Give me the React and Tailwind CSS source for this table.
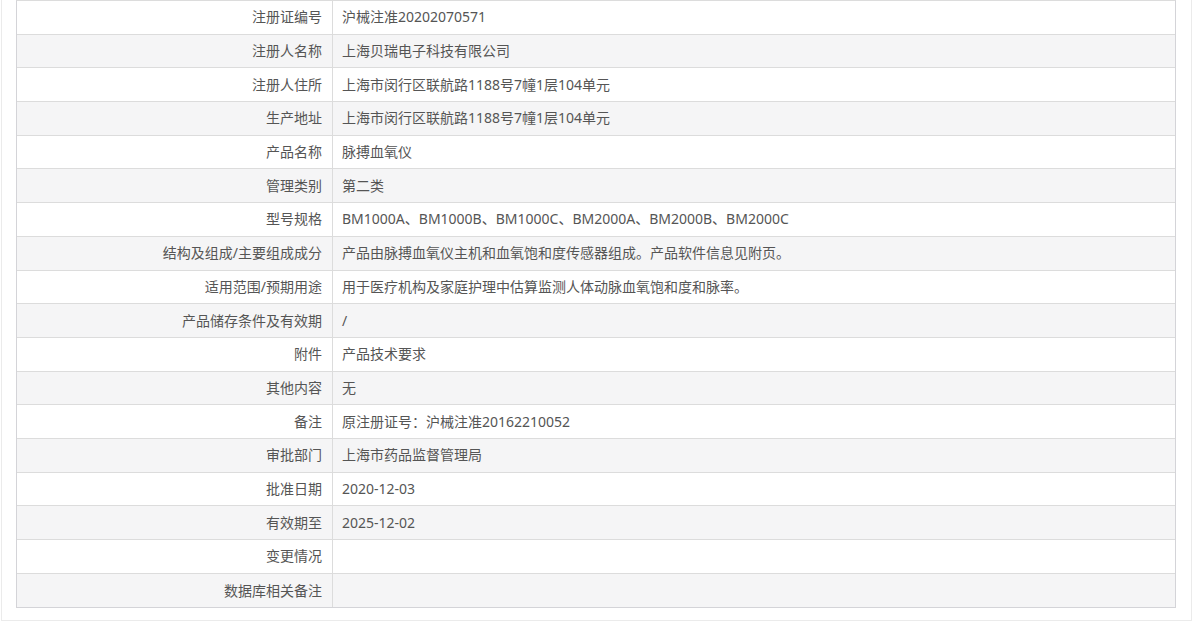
const rows = [
  ["注册证编号", "沪械注准20202070571"],
  ["注册人名称", "上海贝瑞电子科技有限公司"],
  ["注册人住所", "上海市闵行区联航路1188号7幢1层104单元"],
  ["生产地址", "上海市闵行区联航路1188号7幢1层104单元"],
  ["产品名称", "脉搏血氧仪"],
  ["管理类别", "第二类"],
  ["型号规格", "BM1000A、BM1000B、BM1000C、BM2000A、BM2000B、BM2000C"],
  ["结构及组成/主要组成成分", "产品由脉搏血氧仪主机和血氧饱和度传感器组成。产品软件信息见附页。"],
  ["适用范围/预期用途", "用于医疗机构及家庭护理中估算监测人体动脉血氧饱和度和脉率。"],
  ["产品储存条件及有效期", "/"],
  ["附件", "产品技术要求"],
  ["其他内容", "无"],
  ["备注", "原注册证号：沪械注准20162210052"],
  ["审批部门", "上海市药品监督管理局"],
  ["批准日期", "2020-12-03"],
  ["有效期至", "2025-12-02"],
  ["变更情况", ""],
  ["数据库相关备注", ""],
];

const Row = ({ label, value, odd }) => {
  return (
    <div
      className={`flex h-[33.7px] border-b border-[#dcdcdc] last:border-b-0 ${
        odd ? "bg-[#f5f5f6]" : "bg-white"
      }`}
    >
      <div className="w-[316px] shrink-0 flex items-center justify-end pr-[10px] pb-px border-r border-[#dcdcdc]">
        {label}
      </div>
      <div className="flex-1 flex items-center pl-[9px] pb-px">{value}</div>
    </div>
  );
};

export default function App() {
  return (
    <div
      className="w-[1200px] h-[643px] bg-white overflow-hidden text-[14px] text-[#555]"
      style={{ fontFamily: '"Noto Sans", "Noto Sans CJK SC", sans-serif' }}
    >
      <div className="ml-px w-[1191px] mt-[-20px] pt-[20px] pb-[12px] border border-[#ebebeb] pl-[14px]">
        <div className="w-[1160px] mt-[-1px] border border-[#d4d4d8] border-t-[#dcdcdc]">
          {rows.map(([label, value], i) => (
            <Row key={label} label={label} value={value} odd={i % 2 === 1} />
          ))}
        </div>
      </div>
    </div>
  );
}
